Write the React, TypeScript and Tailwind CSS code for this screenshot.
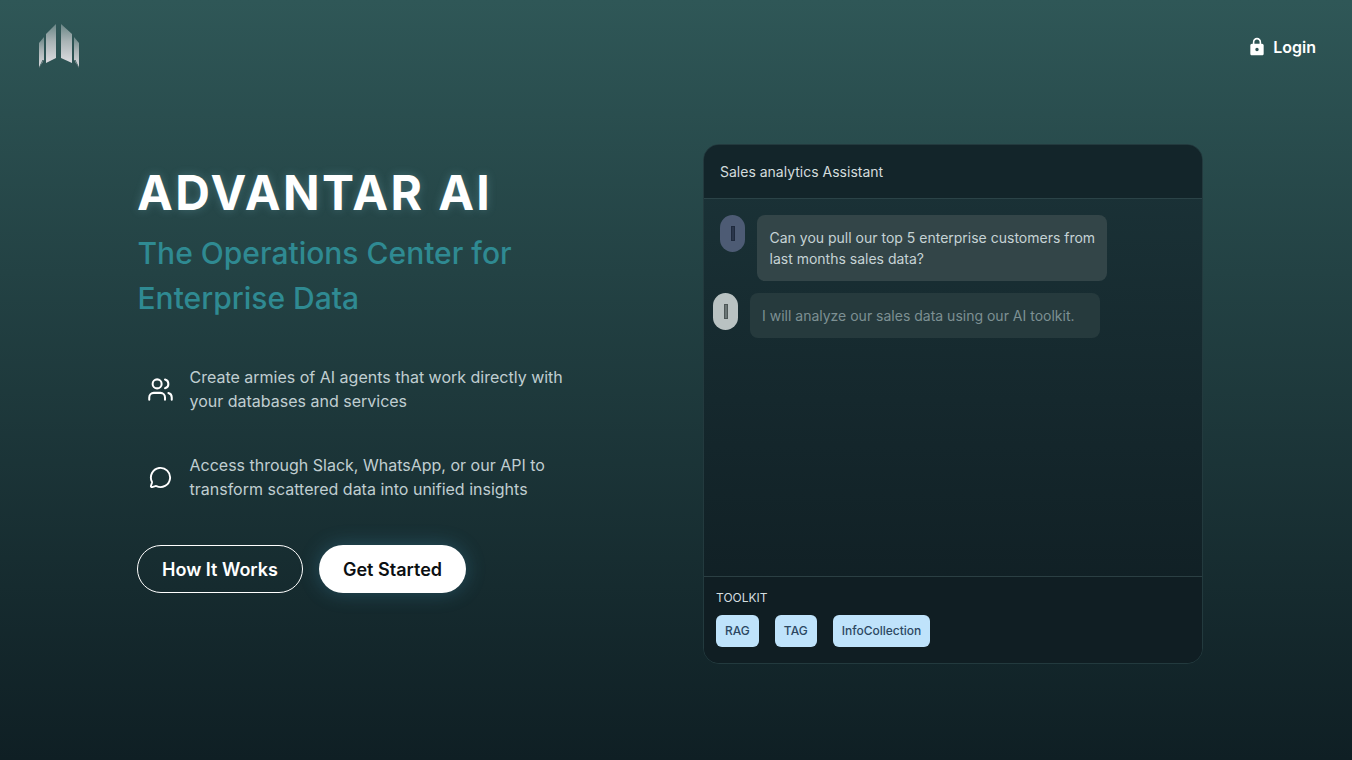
import React from "react";
import { Users, MessageCircle } from "lucide-react";
import { MdLock } from "react-icons/md";

function Logo() {
  return (
    <svg width="42" height="46" viewBox="0 0 42 46" className="block">
      <defs>
        <linearGradient id="lg" x1="0" y1="0" x2="0" y2="1">
          <stop offset="0" stopColor="#6a8686" />
          <stop offset="0.45" stopColor="#aab4b6" />
          <stop offset="1" stopColor="#dcdce0" />
        </linearGradient>
      </defs>
      <polygon points="18,0 18,34 8,39 8,10" fill="url(#lg)" />
      <polygon points="23,0 34,10 34,39 23,34" fill="url(#lg)" />
      <polygon points="6,13 6,36 1,44 1,19" fill="url(#lg)" />
      <polygon points="36,13 41,19 41,44 36,36" fill="url(#lg)" />
      <path d="M1 44 L5 36 L7 44 M2.5 41 L6 41 M41 44 L37 36 L35 44 M39.5 41 L36 41" stroke="#2f5050" strokeWidth="0.8" fill="none" />
    </svg>
  );
}

function Avatar({ light }: { light?: boolean }) {
  return (
    <div className={`flex h-[37px] w-[25px] shrink-0 items-center justify-center rounded-full ${light ? "bg-[#b9c2c2]" : "bg-[#4d5b74]"}`}>
      <div className={`h-[15px] w-[4px] border ${light ? "border-[#4d5757] bg-[#6b7676]" : "border-[#1f2a3d] bg-[#2a364b]"}`} />
    </div>
  );
}

function Feature({ icon, lines }: { icon: React.ReactNode; lines: string[] }) {
  return (
    <div className="flex items-center">
      <div className="flex w-[52.5px] shrink-0 justify-center pr-[5px] text-white">{icon}</div>
      <p className="text-[16px] leading-[24px] text-[#c0ced1]">
        {lines[0]}
        <br />
        {lines[1]}
      </p>
    </div>
  );
}

function Tool({ label }: { label: string }) {
  return (
    <span className="flex h-[32px] items-center rounded-[6px] bg-[#bfe3fb] px-[9px] text-[12px] font-medium text-[#2c4862]">
      {label}
    </span>
  );
}

export default function App() {
  return (
    <div
      className="flex h-[760px] w-full flex-col overflow-hidden bg-gradient-to-b from-[#2f5757] to-[#0f1f24] text-white"
      style={{ fontFamily: "Inter, 'Liberation Sans', sans-serif" }}
    >
      <header className="flex h-[94px] shrink-0 items-center justify-between pl-[38px] pr-[36px]">
        <Logo />
        <div className="flex items-center gap-[6px]">
          <MdLock size={20} />
          <span className="text-[16px] font-semibold">Login</span>
        </div>
      </header>
      <main className="flex items-start pl-[137px] pt-[50px]">
        <section className="w-[566px] shrink-0 pt-[19px]">
          <h1 className="text-[48px] font-bold leading-[60px] tracking-[2.4px] [text-shadow:0_0_10px_rgba(150,220,240,0.25)]">ADVANTAR AI</h1>
          <h2 className="mt-[8px] pl-[0.5px] text-[30px] font-medium leading-[45px] text-[#2f8a92]">
            The Operations Center for
            <br />
            Enterprise Data
          </h2>
          <div className="mt-[44px] flex flex-col gap-[40px]">
            <Feature icon={<Users size={27} strokeWidth={1.8} />} lines={["Create armies of AI agents that work directly with", "your databases and services"]} />
            <Feature icon={<MessageCircle size={23} strokeWidth={2} />} lines={["Access through Slack, WhatsApp, or our API to", "transform scattered data into unified insights"]} />
          </div>
          <div className="mt-[44px] flex gap-[16px]">
            <button className="h-[48px] w-[166px] rounded-full border border-white text-[18px] font-semibold">How It Works</button>
            <button className="h-[48px] w-[147px] rounded-full bg-white text-[18px] font-semibold text-[#0b0f12] shadow-[0_0_20px_rgba(70,160,200,0.3)]">Get Started</button>
          </div>
        </section>
        <section className="flex h-[520px] w-[500px] shrink-0 flex-col overflow-hidden rounded-[16px] border border-[#233a3e] bg-gradient-to-b from-[#1b3338] to-[#0f1d22]">
          <div className="flex h-[54px] shrink-0 items-center border-b border-[#2b4347] bg-[#13252a] px-[16px] text-[14px] text-[#d3dcdd]">
            Sales analytics Assistant
          </div>
          <div className="flex min-h-0 flex-1 flex-col gap-[12px] pl-[9px] pt-[16px]">
            <div className="flex gap-[12px] pl-[7px]">
              <Avatar />
              <div className="w-[350px] whitespace-nowrap rounded-[8px] bg-[#334548] py-[12px] pl-[12.5px] text-[14px] leading-[21px] text-[#c6d3d5]">
                Can you pull our top 5 enterprise customers from
                <br />
                last months sales data?
              </div>
            </div>
            <div className="flex gap-[12px]">
              <Avatar light />
              <div className="w-[350px] rounded-[8px] bg-[#263a3d] px-[12px] py-[12px] text-[14px] leading-[21px] text-[#7d9093]">
                I will analyze our sales data using our AI toolkit.
              </div>
            </div>
          </div>
          <div className="h-[87px] shrink-0 border-t border-[#2b3f43] bg-[#101e23] px-[12px] pt-[13px]">
            <div className="text-[12px] leading-[16px] text-[#d5dfe0]">TOOLKIT</div>
            <div className="mt-[9px] flex gap-[16px]">
              <Tool label="RAG" />
              <Tool label="TAG" />
              <Tool label="InfoCollection" />
            </div>
          </div>
        </section>
      </main>
    </div>
  );
}
